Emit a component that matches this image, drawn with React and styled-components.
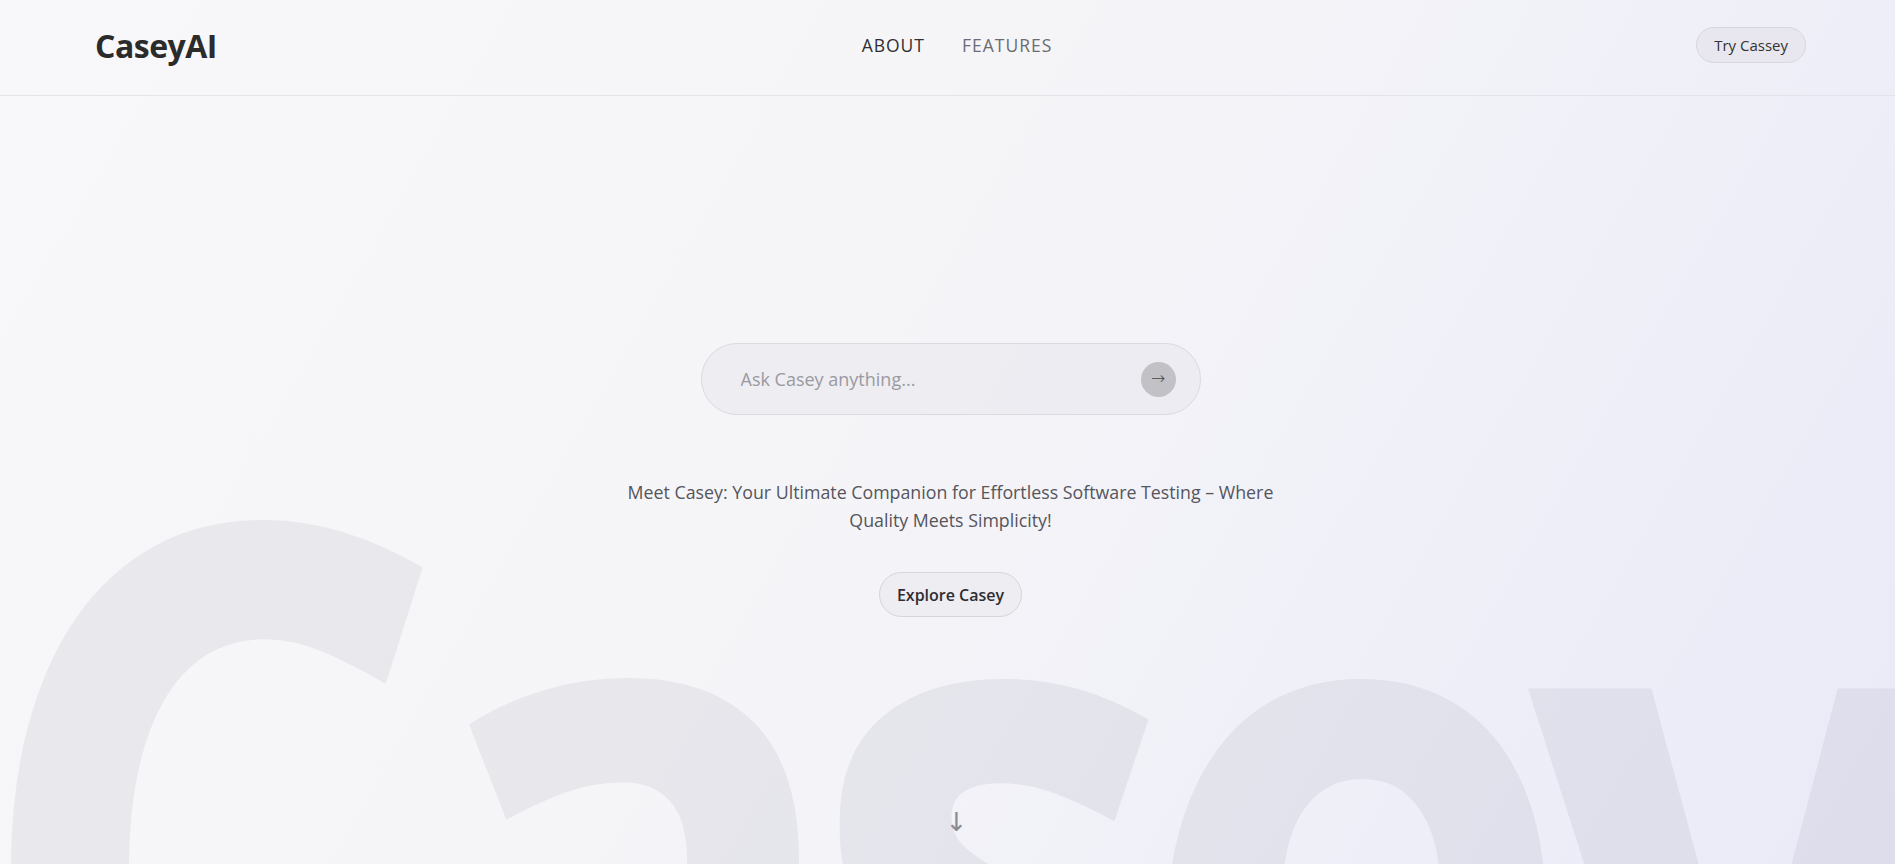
import React from 'react';
import styled, { createGlobalStyle } from 'styled-components';

const GlobalStyle = createGlobalStyle`
  html, body {
    margin: 0;
    padding: 0;
  }
  body {
    font-family: "Open Sans", "Noto Sans", sans-serif;
    background: linear-gradient(120deg, #f8f8fa 0%, #f5f5f8 45%, #eaeaf8 100%);
    min-height: 100vh;
    overflow: hidden;
    color: #333;
  }
`;

const Page = styled.div`
  position: relative;
  min-height: 100vh;
  overflow: hidden;
`;

// giant faded word behind the hero
const BigWord = styled.div`
  position: absolute;
  left: -33px;
  top: 365px;
  font-size: 946px;
  font-weight: 700;
  line-height: 1;
  letter-spacing: -63px;
  color: rgba(40, 40, 70, 0.065);
  transform: scaleX(0.8);
  transform-origin: left top;
  white-space: nowrap;
  pointer-events: none;
  user-select: none;
  z-index: 0;
`;

const Header = styled.header`
  position: relative;
  z-index: 1;
  height: 96px;
  box-sizing: border-box;
  display: grid;
  grid-template-columns: 1fr auto 1fr;
  align-items: center;
  padding: 0 89px 5px 95px;
  border-bottom: 1px solid #e3e3ea;
`;

const Logo = styled.div`
  font-size: 32px;
  font-weight: 700;
  color: #2b2b2b;
  letter-spacing: -0.5px;
`;

const Nav = styled.nav`
  display: flex;
  gap: 37px;
  margin-left: 13px;
`;

const NavLink = styled.a`
  font-size: 17.5px;
  font-weight: 500;
  letter-spacing: 1px;
  text-transform: uppercase;
  text-decoration: none;
  color: ${p => (p.$active ? '#2f2f33' : '#6b6b72')};
  cursor: pointer;
`;

const TryButton = styled.button`
  justify-self: end;
  height: 36px;
  padding: 0 17px;
  border-radius: 18px;
  border: 1px solid #d6d6de;
  background: #e8e7f0;
  font-family: inherit;
  font-size: 15px;
  color: #333;
  cursor: pointer;
`;

const Hero = styled.main`
  position: relative;
  z-index: 1;
  display: flex;
  flex-direction: column;
  align-items: center;
  padding: 247px 0 0 6px;
`;

const SearchBar = styled.form`
  width: 500px;
  height: 72px;
  box-sizing: border-box;
  display: flex;
  align-items: center;
  padding: 0 24px 0 37px;
  border: 1px solid #dadade;
  border-radius: 36px;
  background: rgba(232, 232, 238, 0.6);
`;

const SearchInput = styled.input`
  flex: 1;
  border: none;
  background: transparent;
  font-family: inherit;
  font-size: 18px;
  color: #333;
  outline: none;
  &::placeholder {
    color: #9a9aa0;
  }
`;

const SendButton = styled.button`
  width: 35px;
  height: 35px;
  padding: 0 0 2px;
  border: none;
  border-radius: 50%;
  background: #c2c2c6;
  color: #444;
  font-family: "DejaVu Sans", sans-serif;
  font-size: 17px;
  font-weight: 300;
  display: flex;
  align-items: center;
  justify-content: center;
  cursor: pointer;
`;

const Tagline = styled.p`
  margin: 63px 0 0;
  max-width: 670px;
  font-size: 17.8px;
  line-height: 28px;
  text-align: center;
  color: #55555c;
`;

const ExploreButton = styled.button`
  margin-top: 38px;
  height: 45px;
  padding: 0 17px;
  border-radius: 23px;
  border: 1px solid #d5d5da;
  background: #eeedf2;
  font-family: inherit;
  font-size: 16px;
  font-weight: 600;
  color: #2e2e32;
  cursor: pointer;
`;

const DownArrow = styled.div`
  margin: 192px 0 0 12px;
  font-family: "DejaVu Sans", sans-serif;
  font-size: 26px;
  line-height: 1;
  color: #8a8a90;
`;

const App = () => {
    return (
        <>
            <GlobalStyle />
            <Page>
                <BigWord aria-hidden="true">Casey</BigWord>
                <Header>
                    <Logo>CaseyAI</Logo>
                    <Nav>
                        <NavLink $active>About</NavLink>
                        <NavLink>Features</NavLink>
                    </Nav>
                    <TryButton>Try Cassey</TryButton>
                </Header>
                <Hero>
                    <SearchBar onSubmit={e => e.preventDefault()}>
                        <SearchInput placeholder="Ask Casey anything..." />
                        <SendButton type="submit">→</SendButton>
                    </SearchBar>
                    <Tagline>
                        Meet Casey: Your Ultimate Companion for Effortless Software Testing – Where Quality Meets Simplicity!
                    </Tagline>
                    <ExploreButton>Explore Casey</ExploreButton>
                    <DownArrow>↓</DownArrow>
                </Hero>
            </Page>
        </>
    )
};

export default App
